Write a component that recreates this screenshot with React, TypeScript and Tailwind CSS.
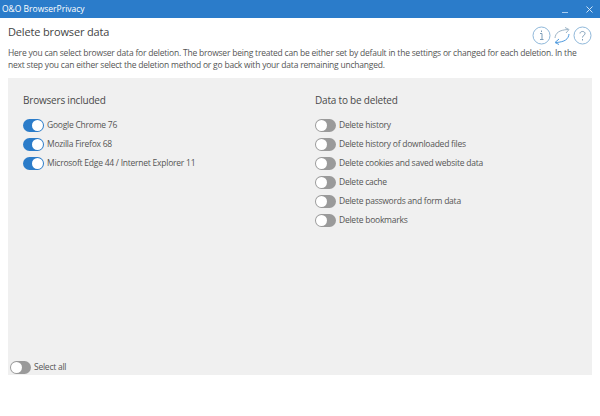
const browsers = [
  "Google Chrome 76",
  "Mozilla Firefox 68",
  "Microsoft Edge 44 / Internet Explorer 11",
];

const dataItems = [
  "Delete history",
  "Delete history of downloaded files",
  "Delete cookies and saved website data",
  "Delete cache",
  "Delete passwords and form data",
  "Delete bookmarks",
];

const Toggle = ({ on }: { on: boolean }) => (
  <span
    className={`flex h-[13px] w-[21px] shrink-0 rounded-full p-[1px] ${
      on ? "justify-end bg-[#2b7cc9]" : "justify-start bg-[#9a9a9a]"
    }`}
  >
    <span className="h-[11px] w-[11px] rounded-full bg-white" />
  </span>
);

const Row = ({ label, on }: { label: string; on: boolean }) => (
  <div className="flex h-[19px] items-center gap-[3px]">
    <Toggle on={on} />
    <span className="text-[8.5px] tracking-[-0.24px] text-[#555555]">{label}</span>
  </div>
);

const InfoIcon = () => (
  <svg width="19" height="19" viewBox="0 0 19 19" fill="none" stroke="#8fb8da" strokeWidth="1">
    <circle cx="9.5" cy="9.5" r="8.5" />
    <path d="M8 7.5 H10 V13.5 M8 13.5 H11.5" stroke="#7d9db8" />
    <path d="M9.5 4.5 V6" stroke="#7d9db8" />
  </svg>
);

const HelpIcon = () => (
  <svg width="19" height="19" viewBox="0 0 19 19" fill="none" stroke="#8fb8da" strokeWidth="1">
    <circle cx="9.5" cy="9.5" r="8.5" />
    <path d="M7 7.5 C7 4.8 12 4.8 12 7.5 C12 9.5 9.5 9.3 9.5 11.5" stroke="#7d9db8" />
    <path d="M9.5 13 V14.5" stroke="#7d9db8" />
  </svg>
);

const RefreshIcon = () => (
  <svg width="16" height="18" viewBox="0 0 16 18" fill="none" strokeWidth="1">
    <path d="M1 11 C1.5 6 5 3 14 2.5" stroke="#9db4c6" />
    <path d="M11 0.5 L15 2.5 L12 6" stroke="#9db4c6" />
    <path d="M15 7 C14.5 12 11 15 2 15.5" stroke="#4f9ade" />
    <path d="M5 12 L1 15.5 L5 17.5" stroke="#4f9ade" />
  </svg>
);

const App = () => {
  return (
    <div className="flex h-[416px] w-[600px] flex-col bg-white font-['Open_Sans',sans-serif]">
      <div className="flex h-[18px] items-center justify-between bg-[#2b7cca] pl-[2px] pr-[7px] text-white">
        <span className="text-[8.5px]">O&amp;O BrowserPrivacy</span>
        <div className="flex items-center gap-[18px]">
          <span className="mt-[6px] h-[1px] w-[6px] bg-[#a9cdf0]" />
          <svg width="7" height="7" viewBox="0 0 7 7" stroke="#cfe3f6" strokeWidth="1">
            <path d="M0.5 0.5 L6.5 6.5 M6.5 0.5 L0.5 6.5" />
          </svg>
        </div>
      </div>

      <div className="flex flex-1 flex-col px-[8px] pb-[41px]">
        <div className="flex h-[28px] items-start justify-between">
          <h1 className="mt-[4px] text-[11px] leading-[20px] tracking-[-0.15px] text-[#444444]">Delete browser data</h1>
          <div className="mt-[8px] flex items-center gap-[3px]">
            <InfoIcon />
            <RefreshIcon />
            <HelpIcon />
          </div>
        </div>
        <p className="mt-[1px] h-[31px] text-[8.5px] leading-[12px] tracking-[-0.21px] text-[#555555]">
          Here you can select browser data for deletion. The browser being treated can be either set by
          default in the settings or changed for each deletion. In the
          <br />
          next step you can either select the deletion method or go back with your data remaining unchanged.
        </p>

        <div className="flex flex-1 flex-col bg-[#f0f0f0]">
          <div className="flex flex-1 pt-[14px]">
            <div className="w-[307px] pl-[15px]">
              <h2 className="mb-[8px] h-[16px] text-[10px] leading-[16px] tracking-[-0.2px] text-[#4a4a4a]">Browsers included</h2>
              {browsers.map((b) => (
                <Row key={b} label={b} on />
              ))}
            </div>
            <div className="flex-1">
              <h2 className="mb-[8px] h-[16px] text-[10px] leading-[16px] tracking-[-0.2px] text-[#4a4a4a]">Data to be deleted</h2>
              {dataItems.map((d) => (
                <Row key={d} label={d} on={false} />
              ))}
            </div>
          </div>
          <div className="mb-[-2px] ml-[2px]">
            <Row label="Select all" on={false} />
          </div>
        </div>
      </div>
    </div>
  );
};

export default App;
